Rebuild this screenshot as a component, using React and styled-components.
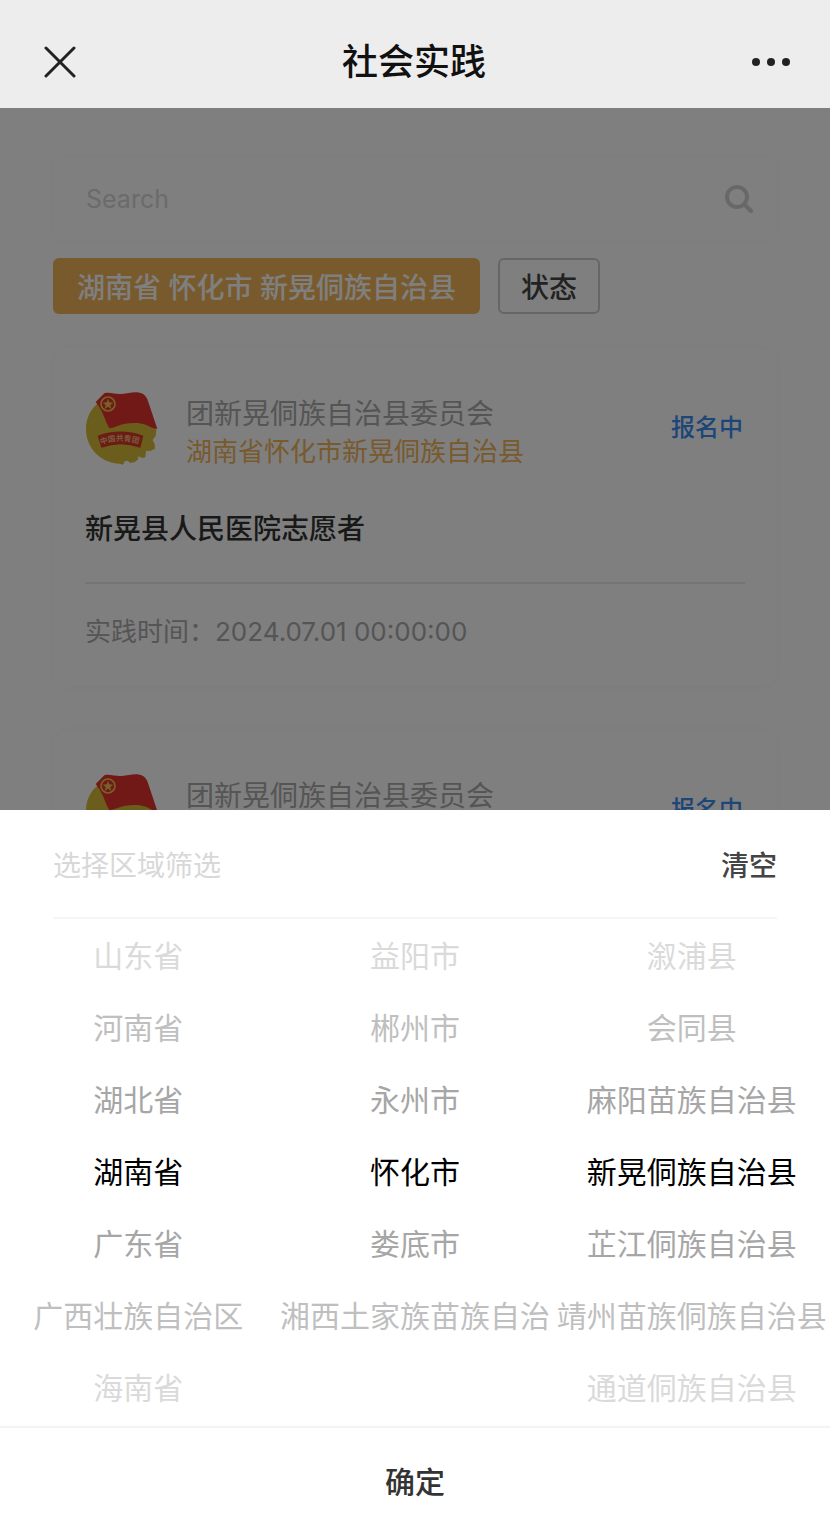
import React from "react";
import styled, { createGlobalStyle } from "styled-components";

const provinces = ["山东省", "河南省", "湖北省", "湖南省", "广东省", "广西壮族自治区", "海南省"];
const cities = ["益阳市", "郴州市", "永州市", "怀化市", "娄底市", "湘西土家族苗族自治", ""];
const counties = [
  "溆浦县",
  "会同县",
  "麻阳苗族自治县",
  "新晃侗族自治县",
  "芷江侗族自治县",
  "靖州苗族侗族自治县",
  "通道侗族自治县",
];

// colour of a wheel row by its distance from the selected one
const fade = ["#000000", "#a6a6a6", "#bfbfbf", "#dadada"];

const activities = [
  {
    id: 1,
    org: "团新晃侗族自治县委员会",
    region: "湖南省怀化市新晃侗族自治县",
    status: "报名中",
    title: "新晃县人民医院志愿者",
    time: "2024.07.01 00:00:00",
  },
  {
    id: 2,
    org: "团新晃侗族自治县委员会",
    status: "报名中",
  },
];

const Emblem = ({ id }) => (
  <EmblemSvg viewBox="30 30 228 228" aria-hidden="true">
    <path
      fill="#d6bb38"
      d="M66 72C38 96 28 134 35 168C44 214 84 250 134 251L144 254L149 244L158 242L166 249L180 246L189 238L190 229L202 234L211 232L213 213L228 212L240 206L239 192L233 180L242 168L244 150L220 110L150 60Z"
    />
    <path
      fill="#e0322c"
      d="M62 66L88 40C104 35 122 44 140 42C160 40 176 34 194 38C210 42 216 52 220 66L247 147C236 146 226 142 216 136C196 127 172 128 150 131C134 134 120 142 103 145C90 122 84 92 62 66Z"
    />
    <circle cx="99" cy="72" r="21" fill="none" stroke="#f0c04c" strokeWidth="5" />
    <path
      fill="#f0c04c"
      d="M99 56L103 67L115 68L106 75L109 87L99 80L89 87L92 75L83 68L95 67Z"
    />
    <path fill="#d8362a" d="M68 167Q137 142 205 167L196 203Q137 182 79 203Z" />
    <path id={`band-${id}`} fill="none" d="M78 194Q137 172 198 194" />
    {id === 1 && (
      <text fontSize="23" fontWeight="700" fill="#f0b878">
        <textPath href={`#band-${id}`}>中国共青团</textPath>
      </text>
    )}
  </EmblemSvg>
);

const ActivityCard = ({ item }) => (
  <Card>
    <CardHead>
      <Emblem id={item.id} />
      <OrgBox>
        <OrgName>{item.org}</OrgName>
        {item.region && <OrgRegion>{item.region}</OrgRegion>}
      </OrgBox>
      <Status>{item.status}</Status>
    </CardHead>
    {item.title && <CardTitle>{item.title}</CardTitle>}
    {item.time && <CardTime>实践时间：{item.time}</CardTime>}
  </Card>
);

const WheelColumn = ({ label, items }) => (
  <Wheel role="listbox" aria-label={label}>
    {items.map((name, i) => (
      <WheelItem
        key={i}
        role="option"
        aria-selected={i === 3}
        $distance={Math.abs(i - 3)}
      >
        {name}
      </WheelItem>
    ))}
  </Wheel>
);

const App = () => {
  return (
    <Screen>
      <GlobalStyle />
      <NavBar>
        <NavButton aria-label="关闭">
          <svg width="32" height="32" viewBox="0 0 32 32" aria-hidden="true">
            <path
              d="M2 2L30 30M30 2L2 30"
              stroke="#222"
              strokeWidth="3"
              strokeLinecap="round"
            />
          </svg>
        </NavButton>
        <NavTitle>社会实践</NavTitle>
        <NavButton aria-label="更多">
          <svg width="38" height="10" viewBox="0 0 38 10" fill="#222" aria-hidden="true">
            <circle cx="4" cy="5" r="4" />
            <circle cx="19" cy="5" r="4" />
            <circle cx="34" cy="5" r="4" />
          </svg>
        </NavButton>
      </NavBar>

      <Main>
        <SearchBox>
          <SearchInput type="text" placeholder="Search" aria-label="Search" />
          <svg width="28" height="28" viewBox="0 0 28 28" fill="none" stroke="#d0d0d0" aria-hidden="true">
            <circle cx="12" cy="12" r="10" strokeWidth="4" />
            <path d="M19 19L26 26" strokeWidth="4" strokeLinecap="round" />
          </svg>
        </SearchBox>
        <Filters>
          <FilterButton $active>湖南省 怀化市 新晃侗族自治县</FilterButton>
          <FilterButton>状态</FilterButton>
        </Filters>
        <CardList>
          {activities.map((item) => (
            <ActivityCard key={item.id} item={item} />
          ))}
        </CardList>
        <Mask />
      </Main>

      <Sheet>
        <SheetHead>
          <SheetTitle>选择区域筛选</SheetTitle>
          <ClearButton>清空</ClearButton>
        </SheetHead>
        <Wheels>
          <WheelColumn label="省" items={provinces} />
          <WheelColumn label="市" items={cities} />
          <WheelColumn label="县" items={counties} />
        </Wheels>
        <ConfirmButton>确定</ConfirmButton>
      </Sheet>
    </Screen>
  );
};

export default App;

const GlobalStyle = createGlobalStyle`
  * {
    box-sizing: border-box;
  }
  body {
    margin: 0;
    font-family: Inter, "Noto Sans CJK SC", sans-serif;
    background-color: #ffffff;
  }
  button, input {
    font-family: inherit;
  }
`;

const Screen = styled.div`
  height: 100vh;
  display: flex;
  flex-direction: column;
`;

const NavBar = styled.header`
  display: flex;
  align-items: center;
  justify-content: space-between;
  padding: 29px 40px 13px 44px;
  background-color: #ededed;
`;
const NavTitle = styled.h1`
  margin: 0;
  font-size: 36px;
  line-height: 66px;
  font-weight: 500;
  color: #111111;
`;
const NavButton = styled.button`
  display: flex;
  padding: 0;
  border: none;
  background: none;
`;

const Main = styled.main`
  position: relative;
  flex: 1;
  min-height: 0;
  overflow: hidden;
  padding: 50px 53px 0;
`;
const Mask = styled.div`
  position: absolute;
  inset: 0;
  background-color: rgba(0, 0, 0, 0.5);
`;

const SearchBox = styled.div`
  display: flex;
  align-items: center;
  height: 82px;
  padding: 0 24px 0 33px;
  border-radius: 8px;
  box-shadow: 0 0 8px rgba(0, 0, 0, 0.03);
`;
const SearchInput = styled.input`
  flex: 1;
  min-width: 0;
  padding: 0;
  border: none;
  background: none;
  font-size: 25px;

  &::placeholder {
    color: #d6d6d6;
    opacity: 1;
  }
`;

const Filters = styled.div`
  display: flex;
  gap: 18px;
  margin-top: 18px;
`;
const FilterButton = styled.button`
  height: 56px;
  padding: 0 ${(p) => (p.$active ? "24px" : "21px")};
  border: ${(p) => (p.$active ? "none" : "2px solid #cccccc")};
  border-radius: 6px;
  background-color: ${(p) => (p.$active ? "#f0b45a" : "#ffffff")};
  color: ${(p) => (p.$active ? "#ffffff" : "#444444")};
  font-size: 28px;
  font-weight: 500;
  white-space: nowrap;
`;

const CardList = styled.div`
  display: flex;
  flex-direction: column;
  gap: 43px;
  margin-top: 34px;
`;
const Card = styled.article`
  padding: 42px 32px 35px;
  border-radius: 16px;
  box-shadow: 0 0 8px rgba(0, 0, 0, 0.04);
`;
const CardHead = styled.div`
  display: flex;
  align-items: flex-start;
`;
const EmblemSvg = styled.svg`
  width: 76px;
  height: 76px;
  margin-right: 25px;
`;
const OrgBox = styled.div`
  flex: 1;
  padding-top: 6px;
  line-height: 37px;
`;
const OrgName = styled.div`
  font-size: 28px;
  color: #aaaaaa;
`;
const OrgRegion = styled.div`
  font-size: 26px;
  color: #f0b45a;
`;
const Status = styled.div`
  margin-right: 2px;
  font-size: 24px;
  line-height: 76px;
  font-weight: 500;
  color: #3a8cf0;
`;
const CardTitle = styled.h2`
  margin: 0;
  padding: 39px 0 33px;
  border-bottom: 2px solid #eaeaea;
  font-size: 28px;
  line-height: 40px;
  font-weight: 500;
  color: #333333;
`;
const CardTime = styled.p`
  margin: 28px 0 0;
  font-size: 26px;
  line-height: 40px;
  color: #aaaaaa;
`;

const Sheet = styled.section`
  background-color: #ffffff;
`;
const SheetHead = styled.div`
  display: flex;
  align-items: center;
  justify-content: space-between;
  height: 109px;
  margin: 0 53px;
  border-bottom: 2px solid #f5f5f5;
`;
const SheetTitle = styled.h2`
  margin: 0;
  font-size: 28px;
  font-weight: 400;
  color: #d8d8d8;
`;
const ClearButton = styled.button`
  padding: 0;
  border: none;
  background: none;
  font-size: 28px;
  font-weight: 500;
  color: #444444;
`;

const Wheels = styled.div`
  display: grid;
  grid-template-columns: repeat(3, 1fr);
  padding: 1px 0 2px;
`;
const Wheel = styled.div`
  min-width: 0;
`;
const WheelItem = styled.div`
  height: 72px;
  font-size: 30px;
  line-height: 72px;
  text-align: center;
  white-space: nowrap;
  color: ${(p) => fade[p.$distance]};
`;

const ConfirmButton = styled.button`
  display: block;
  width: 100%;
  height: 103px;
  padding: 2px 0 0;
  border: none;
  border-top: 2px solid #f3f3f3;
  background: none;
  font-size: 30px;
  font-weight: 500;
  color: #333333;
`;
